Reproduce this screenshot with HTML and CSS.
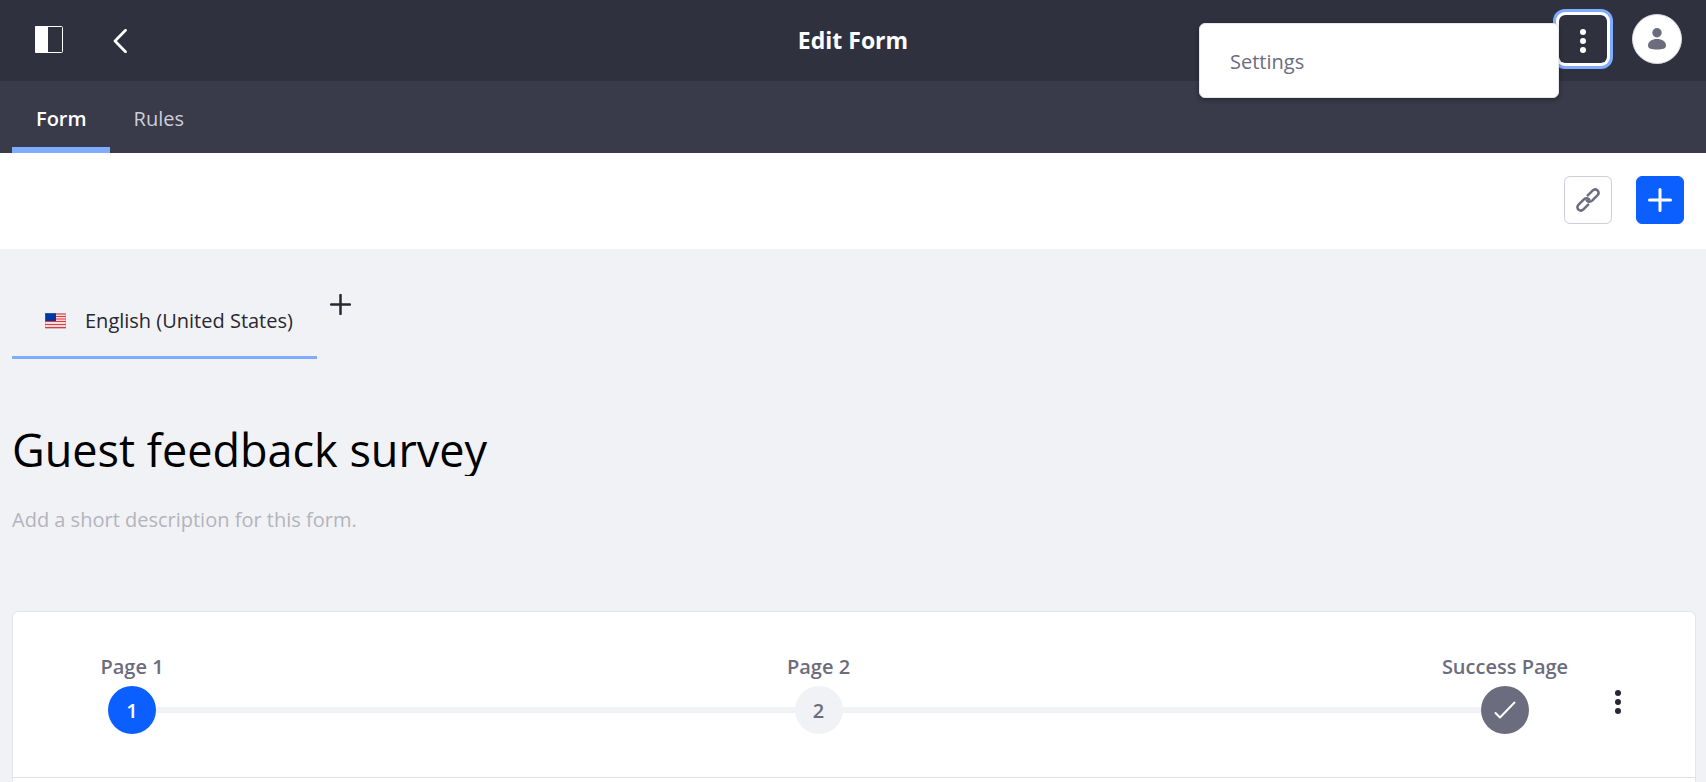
FILE: index.html
```html
<!DOCTYPE html>
<html lang="en">
<head>
<meta charset="utf-8">
<title>Edit Form</title>
<link rel="stylesheet" href="styles.css">
</head>
<body>
<header class="topbar">
  <div class="topbar-side">
    <button class="icon-button" type="button" aria-label="Toggle product menu">
      <svg width="28" height="27" viewBox="0 0 28 27"><rect x=".5" y=".5" width="27" height="26" rx="1" fill="none" stroke="#fff"/><rect width="13" height="27" rx="1" fill="#fff"/></svg>
    </button>
    <a class="icon-button" href="#" aria-label="Back">
      <svg width="24" height="24" viewBox="0 0 24 24"><path d="M17.500 1.300 7 12l10.500 10.700" fill="none" stroke="#fff" stroke-width="2.700" stroke-linecap="round" stroke-linejoin="round"/></svg>
    </a>
  </div>
  <h1 class="page-title">Edit Form</h1>
  <div class="topbar-side topbar-end">
    <div class="options">
      <button class="options-button" type="button" aria-label="Options" aria-expanded="true">
        <svg width="24" height="24" viewBox="0 0 24 24" fill="#fff"><circle cx="12" cy="3" r="3"/><circle cx="12" cy="12" r="3"/><circle cx="12" cy="21" r="3"/></svg>
      </button>
      <div class="menu"><a class="menu-item" href="#">Settings</a></div>
    </div>
    <button class="avatar" type="button" aria-label="User profile">
      <svg width="18" height="22" viewBox="0 0 18 22" fill="#6b6c7e"><circle cx="9" cy="4.700" r="4.700"/><path d="M9 11c5 0 9 2.600 9 6.300S14.500 21.500 9 21.500 0 21 0 17.300 4 11 9 11z"/></svg>
    </button>
  </div>
</header>
<nav class="tabs" aria-label="Form sections">
  <a class="tab tab-active" href="#" aria-current="page">Form</a>
  <a class="tab" href="#">Rules</a>
</nav>
<div class="toolbar">
  <button class="tool" type="button" aria-label="Share link">
    <svg width="24" height="24" viewBox="0 0 24 24" fill="none" stroke="#6b6c7e" stroke-width="2.500" stroke-linecap="round" stroke-linejoin="round"><path d="M11.800 7.400l4.800-4.800a3.700 3.700 0 0 1 4.900-.2 3.700 3.700 0 0 1-.1 5l-5.300 5.300c-1.600 1.500-4 1.600-5.300-.2"/><path d="M12.200 16.600l-4.800 4.800a3.700 3.700 0 0 1-4.900.2 3.700 3.700 0 0 1 .1-5l5.300-5.300c1.600-1.500 4-1.600 5.300.2"/></svg>
  </button>
  <button class="tool tool-primary" type="button" aria-label="Add element">
    <svg width="24" height="24" viewBox="0 0 24 24"><path d="M12 1.500v21M1.500 12h21" stroke="#fff" stroke-width="3" stroke-linecap="round"/></svg>
  </button>
</div>
<main class="content">
  <div class="languages">
    <button class="language" type="button">
      <svg width="21" height="16" viewBox="0 0 21 16"><rect width="21" height="16" fill="#f7dcdf"/><path d="M0 1h21M0 3.500h21M0 6h21M0 8.500h21M0 11.500h21M0 14.500h21" stroke="#e0393e" stroke-width="1.100"/><rect width="11" height="8" fill="#0039a6"/><rect x=".5" y=".5" width="20" height="15" fill="none" stroke="#888" stroke-opacity=".35"/></svg>
      <span>English (United States)</span>
    </button>
    <button class="add-language" type="button" aria-label="Add translation">
      <svg width="21" height="21" viewBox="0 0 21 21"><path d="M10.500 1v19M1 10.500h19" stroke="#272833" stroke-width="2.500" stroke-linecap="round"/></svg>
    </button>
  </div>
  <input class="form-name" type="text" aria-label="Form name" value="Guest feedback survey">
  <input class="form-description" type="text" aria-label="Form description" placeholder="Add a short description for this form.">
  <section class="card">
    <div class="card-header">
      <ol class="steps">
        <li class="step"><button class="step-button" type="button"><span class="step-label">Page 1</span><span class="step-dot step-dot-active">1</span></button></li>
        <li class="step"><button class="step-button" type="button"><span class="step-label">Page 2</span><span class="step-dot">2</span></button></li>
        <li class="step"><button class="step-button" type="button"><span class="step-label">Success Page</span><span class="step-dot step-dot-done"><svg width="22" height="18" viewBox="0 0 22 18"><path d="M1.500 12l4.500 4.500L20.500 1.500" fill="none" stroke="#fff" stroke-width="2" stroke-linecap="round" stroke-linejoin="round"/></svg></span></button></li>
      </ol>
      <button class="page-options" type="button" aria-label="Page options">
        <svg width="24" height="24" viewBox="0 0 24 24" fill="#272833"><circle cx="12" cy="3" r="3"/><circle cx="12" cy="12" r="3"/><circle cx="12" cy="21" r="3"/></svg>
      </button>
    </div>
    <div class="card-body"></div>
  </section>
</main>
</body>
</html>
```
FILE: styles.css
```css
* { box-sizing: border-box; }
html { height: 100%; }
body {
  margin: 0;
  height: 100%;
  display: flex;
  flex-direction: column;
  overflow: hidden;
  background: #f1f2f5;
  color: #272833;
  font: 20px/30px "Segoe UI", "Open Sans", "Noto Sans", sans-serif;
}
button, input { font: inherit; color: inherit; border: 0; padding: 0; margin: 0; background: none; }
a { color: inherit; text-decoration: none; }
svg { display: block; flex: none; }

.topbar {
  display: flex;
  align-items: center;
  height: 81px;
  flex: none;
  padding: 0 24px;
  background: #30313f;
  color: #fff;
}
.topbar-side { flex: 1; display: flex; align-items: center; gap: 24px; }
.topbar-end { justify-content: flex-end; gap: 25px; padding-bottom: 3px; }
.icon-button { display: flex; align-items: center; justify-content: center; width: 48px; height: 48px; padding: 0 0 2px 1px; }
a.icon-button { padding: 0; }
.page-title { margin: 0; padding-bottom: 2px; font-size: 23px; line-height: 30px; font-weight: 700; }
.options { position: relative; }
.options-button {
  display: flex;
  align-items: center;
  justify-content: center;
  width: 48px;
  height: 48px;
  padding-top: 3px;
  border-radius: 6px;
  box-shadow: 0 0 0 3px #fff, 0 0 0 6px #80acff;
}
.menu {
  position: absolute;
  top: 8px;
  right: 100%;
  width: 360px;
  padding: 11px 0;
  border: 1px solid #e7e7ed;
  border-radius: 6px;
  background: #fff;
  box-shadow: 0 2px 5px rgba(0, 0, 0, .3);
}
.menu-item { display: block; padding: 12px 30px 9px; color: #6b6c7e; }
.avatar {
  display: flex;
  align-items: center;
  justify-content: center;
  width: 50px;
  height: 50px;
  border: 1px solid #d8d8e0;
  border-radius: 50%;
  background: #fff;
}

.tabs { display: flex; flex: none; height: 72px; padding: 0 12px; background: #393a4a; color: #cdced9; }
.tab { padding: 23px 24px 13px; border-bottom: 6px solid transparent; }
.tab-active { padding-right: 23px; border-color: #80acff; color: #fff; font-weight: 600; }

.toolbar { display: flex; flex: none; justify-content: flex-end; gap: 24px; padding: 23px 22px 25px; background: #fff; }
.tool { display: flex; align-items: center; justify-content: center; width: 48px; height: 48px; border: 1px solid #cdced9; border-radius: 6px; }
.tool-primary { border-color: #0b5fff; background: #0b5fff; }

.content { flex: 1; display: flex; flex-direction: column; padding: 36px 10px 0 12px; }
.languages { display: flex; align-items: flex-start; gap: 12px; }
.language { display: flex; align-items: center; gap: 19px; height: 74px; padding: 0 24px 0 33px; border-bottom: 3px solid #80acff; }
.add-language { display: flex; align-items: center; justify-content: center; width: 24px; height: 39px; }
.form-name { width: 100%; height: 52px; margin-top: 65px; color: #000; font-size: 45px; line-height: 52px; }
.form-description { width: 100%; height: 36px; margin-top: 25px; }
.form-description::placeholder { color: #b3b4bd; opacity: 1; }

.card { flex: 1; display: flex; flex-direction: column; margin-top: 74px; border: 1px solid #e3e4ea; border-bottom: 0; border-radius: 6px 6px 0 0; background: #fff; }
.card-header { display: flex; align-items: flex-end; padding: 40px 65px 43px 95px; border-bottom: 1px solid #dfe0e4; }
.steps { flex: 1; display: flex; margin: 0; padding: 0; list-style: none; color: #6b6c7e; font-weight: 600; }
.step { flex: 1; display: flex; align-items: flex-end; }
.step:last-child { flex: none; }
.step:not(:last-child)::after { content: ""; flex: 1; height: 6px; margin-bottom: 21px; background: #f1f2f5; }
.step-button { display: flex; flex-direction: column; align-items: center; gap: 4px; width: 48px; }
.step-label { white-space: nowrap; }
.step-dot { display: flex; align-items: center; justify-content: center; width: 48px; height: 48px; padding-top: 2px; border-radius: 50%; background: #f1f2f5; }
.step-dot-active { background: #0b5fff; color: #fff; }
.step-dot-done { padding-top: 0; background: #6b6c7e; }
.page-options { display: flex; align-items: center; justify-content: center; width: 24px; height: 48px; margin: 0 0 8px 77px; }
.card-body { flex: 1; }
```
